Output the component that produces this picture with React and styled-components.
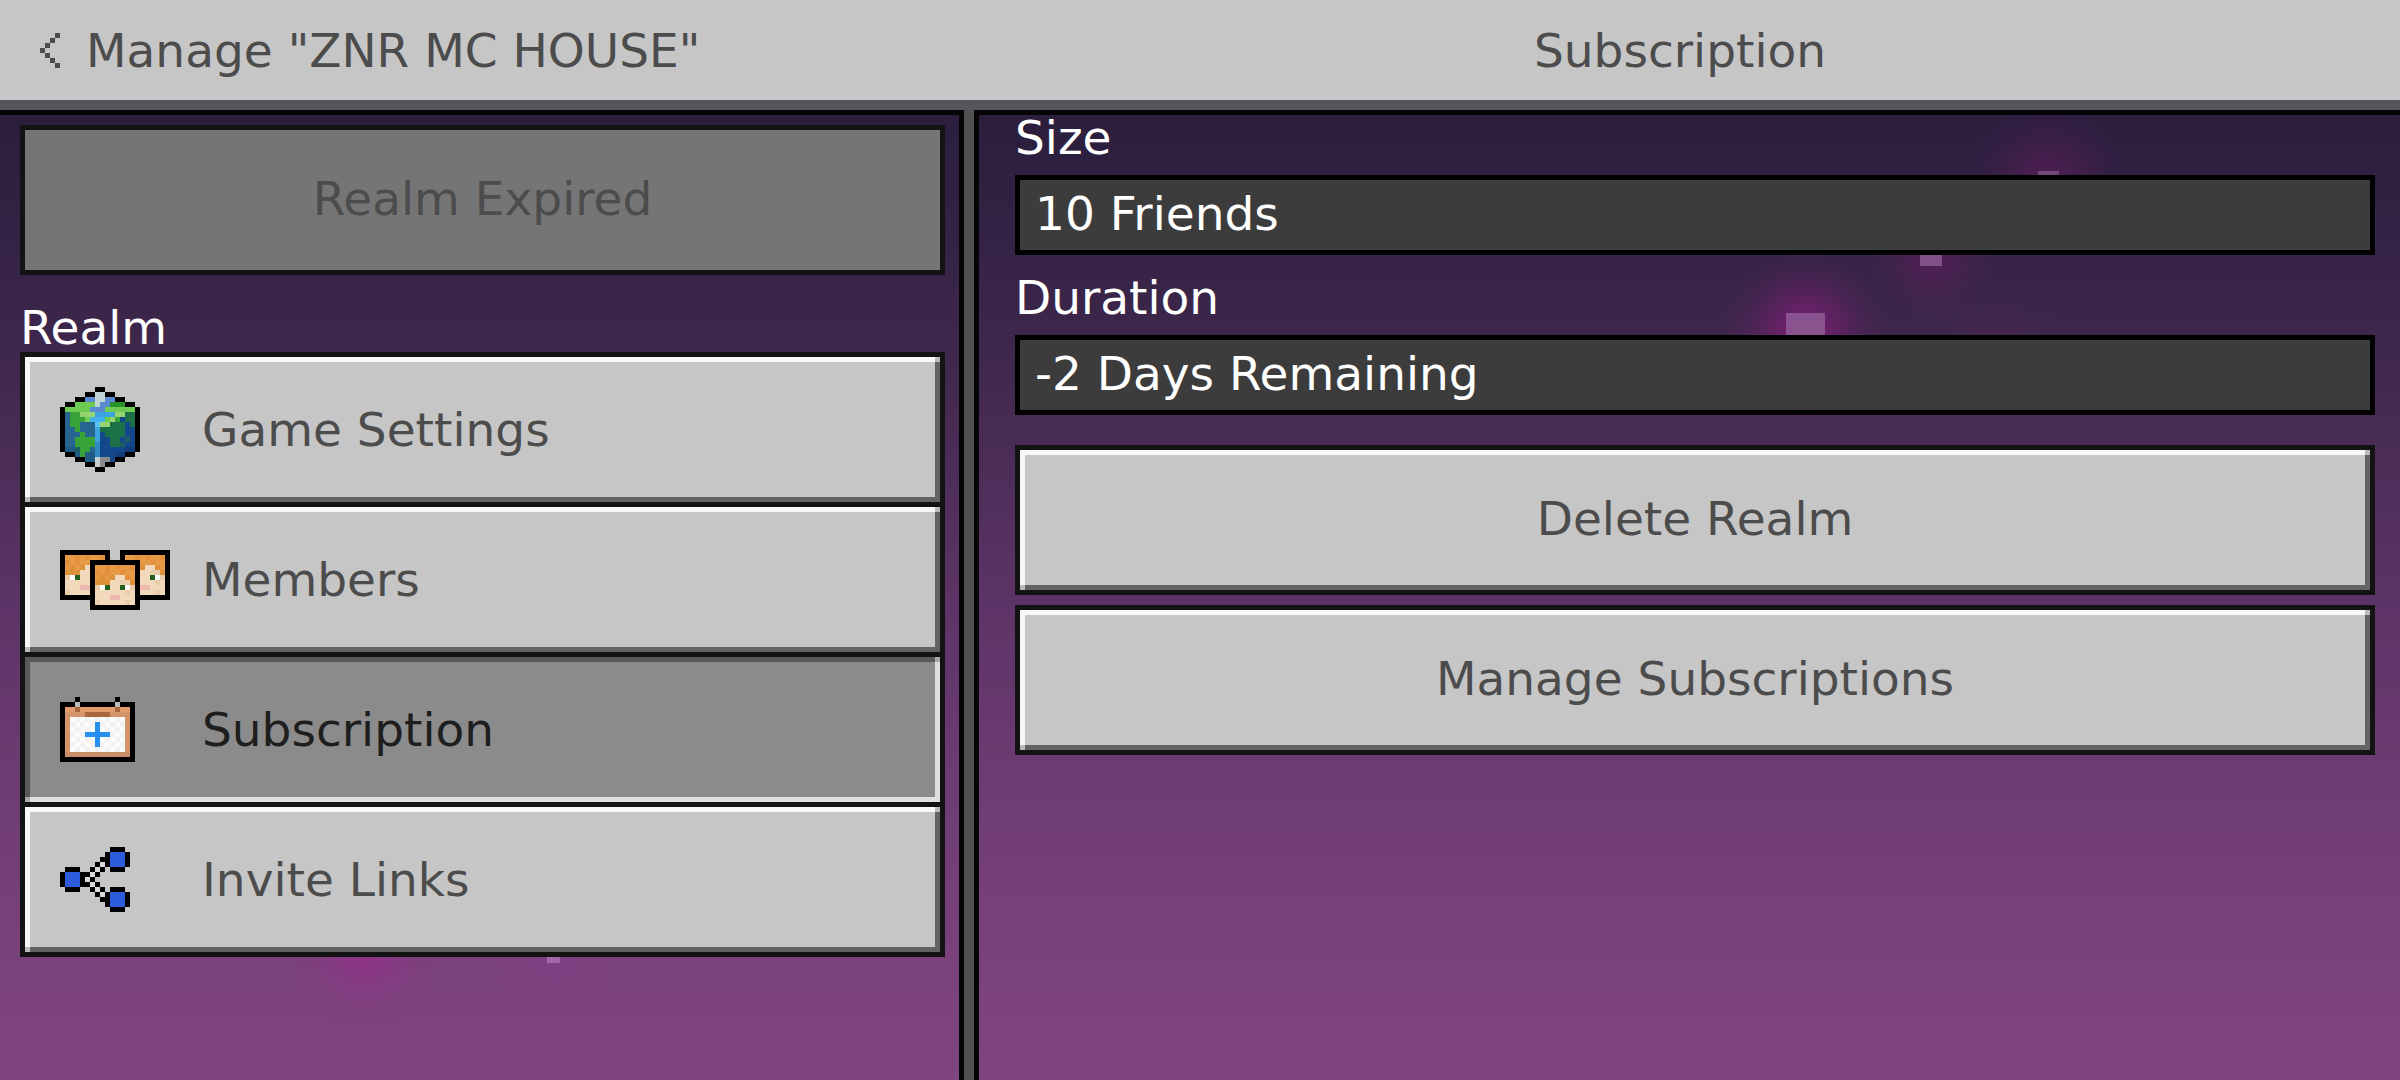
import React from "react";
import styled, { createGlobalStyle, css } from "styled-components";

const GlobalStyle = createGlobalStyle`
  *, *::before, *::after { box-sizing: border-box; }
  body { margin: 0; background: #2d1f3f; }
  button, input { font: inherit; border-radius: 0; margin: 0; }
`;

/* ---------- pixel art ---------- */

const palette = {
  k: "#000000", l: "#c0d5d6", b: "#5a8bd0", g: "#6dcb54", d: "#28922a",
  t: "#25658f", e: "#36a238", y: "#97d471", s: "#3ca4dd", S: "#43b1ee",
  c: "#5bc2f5", f: "#1c7046", n: "#14488c", m: "#1a6063", T: "#1e5c83",
  N: "#113d7b", h: "#318bc0", w: "#c9d0d4", r: "#8b8b8d",
  o: "#e38f3c", O: "#e69a47", q: "#dc9139", p: "#f2d9bb", P: "#e9cda9",
  W: "#ffffff", E: "#23601f", R: "#edb8ae",
  a: "#e19b6c", A: "#d49469", B: "#a9673b", C: "#c98d67",
  G: "#b8b8b8", x: "#fbfbfb", X: "#f3f2f1", u: "#2590ee",
  v: "#2c5cdb", z: "#d9d9d9", i: "#4c4c4c",
};

const globe = [
  ".......kk.......",
  ".....kkllkk.....",
  "...kkbbllbbkk...",
  ".kkgggglbbdddkk.",
  "kgggggbbbggggggk",
  "kteeyyyssssyyffk",
  "kteeegSSSgyenffk",
  "kteetttcyyfffnfk",
  "kttetttsfffffnnk",
  "ktttettsnffffnnk",
  "ktteeeesnnffnmnk",
  "ktteeeehnnffmnnk",
  "kTTmeethnnnnnNNk",
  ".kkTeTThnnnNNkk.",
  "...kkTTwrrnkk...",
  ".....kkwrkk.....",
  ".......kk.......",
];

const face = [
  "kkkkkkkkkk",
  "kOOoOoOOok",
  "koOoOOoOOk",
  "kOqOqppoOk",
  "kqqqppPPqk",
  "kPWEppEWPk",
  "kppppppPpk",
  "kpppRRpppk",
  "kPpppppPpk",
  "kkkkkkkkkk",
];

const calendar = [
  "...k.......k...",
  "kkkGkkkkkkkGkkk",
  "kaaBaaaaaaaBaak",
  "kAAAABBBBBAAAAk",
  "kAxXxXxXxXxXxAk",
  "kAXxXxXuXxXxXAk",
  "kAxXxXxuxXxXxAk",
  "kAXxXuuuuuXxXAk",
  "kAxXxXxuxXxXxAk",
  "kAXxXxXuXxXxXAk",
  "kAxXxXxXxXxXxAk",
  "kCCCCCCCCCCCCCk",
  "kkkkkkkkkkkkkkk",
];

const share = [
  "..........kkk.",
  ".........kvvvk",
  "........kkvvvk",
  ".......kzkvvvk",
  ".kkk..kzk.kkk.",
  "kvvvkkzk......",
  "kvvvkzk.......",
  "kvvvkkzk......",
  ".kkk..kzk.kkk.",
  ".......kzkvvvk",
  "........kkvvvk",
  ".........kvvvk",
  "..........kkk.",
];

const chevron = ["...i", "..i.", ".i..", "i...", ".i..", "..i.", "...i"];

const Sprite = styled.svg`
  display: block;
  flex: none;
  shape-rendering: crispEdges;
`;

function Pixels({ rows, x = 0, y = 0 }) {
  const cells = [];
  rows.forEach((row, r) => {
    let c = 0;
    while (c < row.length) {
      const key = row[c];
      let end = c + 1;
      while (end < row.length && row[end] === key) end += 1;
      if (key !== ".") {
        cells.push(
          <rect key={`${r}-${c}`} x={x + c} y={y + r} width={end - c} height={1} fill={palette[key]} />
        );
      }
      c = end;
    }
  });
  return <>{cells}</>;
}

function PixelIcon({ layers, cols, rows }) {
  return (
    <Sprite width={cols * 5} height={rows * 5} viewBox={`0 0 ${cols} ${rows}`} aria-hidden="true">
      {layers.map((layer, i) => (
        <Pixels key={i} {...layer} />
      ))}
    </Sprite>
  );
}

/* ---------- page ---------- */

const Page = styled.div`
  position: relative;
  z-index: 0;
  min-height: 100vh;
  display: flex;
  flex-direction: column;
  overflow: hidden;
  font-family: "DejaVu Sans", sans-serif;
  font-size: 47px;
  line-height: 45px;
  color: #ffffff;
  background: linear-gradient(
    #2b1e3d 10%, #302141 18%, #3e274c 32%, #492c55 41%,
    #5d3467 56%, #6c3b71 71%, #79417b 87%, #7f457f 100%
  );
`;

const Header = styled.header`
  display: grid;
  grid-template-columns: 40% 1fr;
  align-items: center;
  min-height: 110px;
  background: #c6c6c6;
  border-bottom: 10px solid #58555a;
  box-shadow: inset 0 -5px #c7c8ca;
  color: #4c4c4c;
`;

const BackButton = styled.button`
  display: flex;
  align-items: center;
  gap: 26px;
  padding: 0 0 0 40px;
  border: 0;
  background: none;
  color: inherit;
  white-space: nowrap;
  cursor: pointer;
`;

const Title = styled.h1`
  margin: 0;
  font: inherit;
  text-align: center;
`;

const Columns = styled.div`
  flex: 1;
  display: grid;
  grid-template-columns: calc(40% + 4px) 10px 1fr;
`;

const Sidebar = styled.aside`
  border: solid #050507;
  border-width: 5px 5px 0 0;
  padding: 10px 14px 20px 20px;
`;

const Divider = styled.div`
  background: #525252;
`;

const Details = styled.main`
  display: flex;
  flex-direction: column;
  border: solid #050507;
  border-width: 5px 0 0 5px;
  padding: 0 25px 20px 36px;
`;

const bevel = (light, dark, corner, face) => css`
  background:
    linear-gradient(${corner}, ${corner}) right top / 5px 5px no-repeat,
    linear-gradient(${corner}, ${corner}) left bottom / 5px 5px no-repeat,
    linear-gradient(${light}, ${light}) left top / 100% 5px no-repeat,
    linear-gradient(${light}, ${light}) left top / 5px 100% no-repeat,
    linear-gradient(${dark}, ${dark}) left bottom / 100% 5px no-repeat,
    linear-gradient(${dark}, ${dark}) right top / 5px 100% no-repeat,
    ${face};
  background-origin: padding-box;
`;

const Button = styled.button`
  display: block;
  width: 100%;
  height: 150px;
  padding: 0 0 4px;
  border: 5px solid #131313;
  color: #4c4c4c;
  cursor: pointer;
  ${bevel("#f7f7f7", "#636363", "#bbbbbb", "#c6c6c6")}

  &:disabled {
    background: #757575;
    cursor: default;
  }
`;

const SectionTitle = styled.h2`
  margin: 30px 0 2px;
  font: inherit;
`;

const NavItem = styled(Button)`
  display: grid;
  grid-template-columns: 142px 1fr;
  align-items: center;
  height: 155px;
  padding: 0 0 0 35px;
  text-align: left;

  & + & { margin-top: -5px; }

  ${(p) =>
    p.$selected &&
    css`
      color: #1e1e1e;
      ${bevel("#5a5759", "#dfdfdf", "#a8a8a8", "#8b8b8b")}
    `}
`;

const Field = styled.div`
  display: flex;
  flex-direction: column;
  gap: 15px;
  margin-bottom: 20px;
`;

const FieldInput = styled.input`
  width: 100%;
  height: 80px;
  padding: 0 15px 4px;
  border: 5px solid #000000;
  outline: 0;
  background: #3c3c3c;
  color: #ffffff;
`;

const Actions = styled.div`
  display: grid;
  gap: 10px;
  margin-top: 10px;
`;

const Particle = styled.span`
  position: absolute;
  z-index: -1;
  left: ${(p) => p.$left};
  top: ${(p) => p.$top};
  width: ${(p) => p.$size}px;
  height: ${(p) => p.$size}px;
  background: ${(p) => p.$color};
`;

const Glow = styled(Particle)`
  background: radial-gradient(
    closest-side,
    rgba(${(p) => p.$color}, ${(p) => p.$alpha}),
    rgba(${(p) => p.$color}, ${(p) => p.$alpha * 0.55}) 35%,
    rgba(${(p) => p.$color}, ${(p) => p.$alpha * 0.15}) 70%,
    rgba(${(p) => p.$color}, 0)
  );
  transform: translate(-50%, -50%);
`;

const glows = [
  { left: "75.2%", top: "30.8%", size: 170, color: "130, 30, 120", alpha: 0.95 },
  { left: "80.5%", top: "23.6%", size: 140, color: "110, 28, 100", alpha: 0.55 },
  { left: "85.3%", top: "16.8%", size: 170, color: "110, 28, 100", alpha: 0.55 },
  { left: "83.2%", top: "32%", size: 150, color: "100, 35, 100", alpha: 0.2 },
  { left: "15.2%", top: "88.2%", size: 150, color: "150, 45, 140", alpha: 0.75 },
  { left: "23.1%", top: "88.2%", size: 130, color: "135, 60, 140", alpha: 0.5 },
];

const sparks = [
  { left: "74.4%", top: "29%", size: 39, color: "#88538f" },
  { left: "80%", top: "22.6%", size: 22, color: "#7f5188" },
  { left: "84.9%", top: "15.8%", size: 21, color: "#71477c" },
  { left: "22.8%", top: "88%", size: 13, color: "#a565a9" },
];

const navItems = [
  { label: "Game Settings", icon: { cols: 16, rows: 17, layers: [{ rows: globe }] } },
  {
    label: "Members",
    icon: {
      cols: 22,
      rows: 12,
      layers: [{ rows: face }, { rows: face, x: 12 }, { rows: face, x: 6, y: 2 }],
    },
  },
  { label: "Subscription", selected: true, icon: { cols: 15, rows: 13, layers: [{ rows: calendar }] } },
  { label: "Invite Links", icon: { cols: 14, rows: 13, layers: [{ rows: share }] } },
];

const fields = [
  { id: "size", label: "Size", value: "10 Friends" },
  { id: "duration", label: "Duration", value: "-2 Days Remaining" },
];

export default function App() {
  return (
    <>
      <GlobalStyle />
      <Page>
        {glows.map((g) => (
          <Glow key={g.left} $left={g.left} $top={g.top} $size={g.size} $color={g.color} $alpha={g.alpha} />
        ))}
        {sparks.map((s) => (
          <Particle key={s.left} $left={s.left} $top={s.top} $size={s.size} $color={s.color} />
        ))}

        <Header>
          <BackButton type="button">
            <PixelIcon cols={4} rows={7} layers={[{ rows: chevron }]} />
            <span>Manage "ZNR MC HOUSE"</span>
          </BackButton>
          <Title>Subscription</Title>
        </Header>

        <Columns>
          <Sidebar>
            <Button type="button" disabled>
              Realm Expired
            </Button>
            <SectionTitle>Realm</SectionTitle>
            <nav>
              {navItems.map((item) => (
                <NavItem
                  key={item.label}
                  type="button"
                  $selected={item.selected}
                  aria-current={item.selected ? "page" : undefined}
                >
                  <PixelIcon {...item.icon} />
                  <span>{item.label}</span>
                </NavItem>
              ))}
            </nav>
          </Sidebar>
          <Divider />
          <Details>
            {fields.map((field) => (
              <Field key={field.id}>
                <label htmlFor={field.id}>{field.label}</label>
                <FieldInput id={field.id} type="text" value={field.value} readOnly />
              </Field>
            ))}
            <Actions>
              <Button type="button">Delete Realm</Button>
              <Button type="button">Manage Subscriptions</Button>
            </Actions>
          </Details>
        </Columns>
      </Page>
    </>
  );
}
